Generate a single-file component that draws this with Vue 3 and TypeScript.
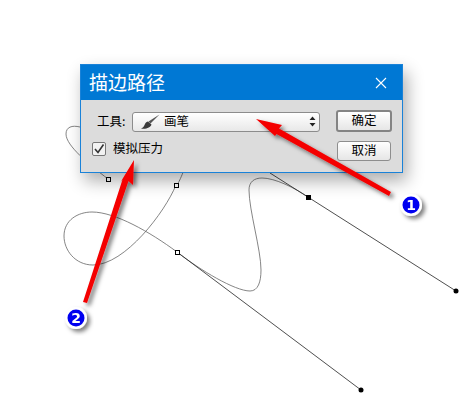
<script setup lang="ts">
const anchors: [number, number][] = [[108, 179], [176, 185], [177, 252]]
</script>

<template>
  <div class="stage">
    <svg class="layer" viewBox="0 0 472 409" width="472" height="409">
      <g fill="none">
        <path class="curve" d="M80 127C72 125 66 127 66 134C66 146 90 165 108 179" />
        <path class="curve" d="M184 170C176 190 176 185 176 185C165 212 125 265 93 265C75 265 64 250 64 236C64 220 78 212 92 212C115 212 150 232 177 252C200 270 235 291 250 291C258 291 261 282 261 270C261 250 249 210 249 190C249 182 254 178 262 178C275 178 295 188 308 197" />
        <path class="handle" d="M270 173L456 291M177 252L361 390" />
      </g>
      <rect v-for="a in anchors" :key="a[0]" class="anchor" :x="a[0] - 1.5" :y="a[1] - 1.5" width="4" height="4" />
      <rect x="306" y="195" width="5" height="5" fill="#000" />
      <circle cx="456" cy="291" r="2.500" fill="#000" />
      <circle cx="361" cy="390" r="2.500" fill="#000" />
    </svg>

    <section class="dialog">
      <header class="title">
        <h1>描边路径</h1>
        <svg class="close" viewBox="0 0 12 12" width="12" height="12">
          <path d="M1 1L11 11M11 1L1 11" stroke="#fff" stroke-width="1.100" fill="none" />
        </svg>
      </header>
      <div class="body">
        <div class="fields">
          <div class="row">
            <span class="label">工具:</span>
            <div class="select">
              <svg class="brush" viewBox="0 0 20 16" width="20" height="16">
                <path d="M18.500 0.500L9.500 9.500L7.500 7.500Z" fill="#555" />
                <path d="M7 7.500L10.500 10.500C9.500 13.500 5 15.500 0 14.500C2.500 13.500 3 12.500 4 10C4.500 8.500 6 7.500 7 7.500Z" fill="#3a3a3a" />
              </svg>
              <span class="value">画笔</span>
              <svg class="stepper" viewBox="0 0 7 11" width="7" height="11">
                <path d="M3.500 0.500L6.500 4H0.500ZM3.500 10.500L0.500 7H6.500Z" fill="#222" />
              </svg>
            </div>
          </div>
          <label class="check">
            <span class="box">
              <svg viewBox="0 0 14 14" width="14" height="14">
                <path d="M3 7L6 10.500L11.500 2.500" stroke="#333" stroke-width="1.600" fill="none" />
              </svg>
            </span>
            <span class="check-text">模拟压力</span>
          </label>
        </div>
        <div class="actions">
          <button class="btn primary" type="button">确定</button>
          <button class="btn" type="button">取消</button>
        </div>
      </div>
    </section>

    <svg class="layer" viewBox="0 0 472 409" width="472" height="409">
      <defs>
        <filter id="drop" x="-30%" y="-30%" width="160%" height="160%">
          <feDropShadow dx="3" dy="3" stdDeviation="2" flood-color="#000" flood-opacity="0.5" />
        </filter>
      </defs>
      <polygon class="arrow" points="256,119 282,125 279,128.500 391,192 389,196 276.500,134 275,136" />
      <polygon class="arrow" points="134,160 133,185 128.500,181 87,303 83,302 122.500,179.500 120,183" />
      <g class="badge">
        <circle cx="411" cy="205" r="11" fill="#fff" />
        <circle cx="411" cy="205" r="8.500" fill="#0000f0" />
        <text x="411" y="210">1</text>
      </g>
      <g class="badge">
        <circle cx="76" cy="318" r="11" fill="#fff" />
        <circle cx="76" cy="318" r="8.500" fill="#0000f0" />
        <text x="76" y="323">2</text>
      </g>
    </svg>
  </div>
</template>

<style scoped>
.stage {
  position: relative;
  width: 472px;
  height: 409px;
  overflow: hidden;
  background: #fff;
  font-family: "Noto Sans CJK SC", "Liberation Sans", sans-serif;
  color: #000;
}
.layer {
  position: absolute;
  left: 0;
  top: 0;
}
.curve {
  stroke: #666;
  stroke-width: 0.8;
}
.handle {
  stroke: #222;
  stroke-width: 0.8;
}
.anchor {
  fill: #fff;
  stroke: #000;
  stroke-width: 1;
}
.dialog {
  position: absolute;
  left: 80px;
  top: 64px;
  width: 323px;
  height: 109px;
  box-sizing: border-box;
  display: flex;
  flex-direction: column;
  border: 1px solid #1a82d8;
  background: #dcdcdc;
  box-shadow: 4px 8px 16px rgba(0, 0, 0, 0.32);
}
.title {
  height: 35px;
  flex: none;
  display: flex;
  align-items: center;
  justify-content: space-between;
  padding: 0 15px 0 8px;
  background: #0078d4;
  color: #fff;
}
.title h1 {
  margin: 0 0 2px;
  font-size: 19px;
  font-weight: 400;
  line-height: 24px;
}
.body {
  flex: 1;
  display: flex;
  justify-content: space-between;
  padding: 10px 10px 0 11px;
}
.fields {
  display: flex;
  flex-direction: column;
  gap: 10px;
  margin-top: 1px;
}
.row {
  display: flex;
  align-items: center;
  gap: 7px;
  padding-left: 5px;
}
.label {
  font-size: 12.5px;
  width: 28px;
  padding-bottom: 2px;
  white-space: nowrap;
}
.select {
  width: 188px;
  height: 20px;
  box-sizing: border-box;
  display: flex;
  align-items: center;
  padding: 0 3px 0 8px;
  border: 1px solid #8c8c8c;
  border-radius: 3px;
  background: linear-gradient(#fff, #e8e8e8);
}
.value {
  flex: 1;
  margin-left: 3px;
  padding-bottom: 2px;
  font-size: 12.5px;
}
.check {
  display: flex;
  align-items: center;
  gap: 7px;
  font-size: 12.5px;
  height: 14px;
}
.check-text {
  padding-bottom: 3px;
}
.box {
  width: 14px;
  height: 14px;
  box-sizing: border-box;
  border: 1px solid #777;
  border-radius: 2px;
  background: #f2f2f2;
  display: flex;
  align-items: center;
  justify-content: center;
}
.box svg {
  flex: none;
}
.actions {
  display: flex;
  flex-direction: column;
  align-items: center;
  gap: 9px;
  width: 56px;
}
.btn {
  width: 54px;
  height: 20px;
  padding: 0 0 2px;
  border: 1px solid #8e8e8e;
  border-radius: 3px;
  background: linear-gradient(#fff, #e6e6e6);
  font: inherit;
  font-size: 12.5px;
  line-height: 16px;
  color: #000;
}
.btn.primary {
  width: 56px;
  height: 22px;
  border: 2px solid #848484;
}
.arrow {
  fill: #f40000;
  filter: url(#drop);
}
.badge {
  filter: url(#drop);
}
.badge text {
  fill: #fff;
  font-family: "DejaVu Sans", sans-serif;
  font-size: 14px;
  font-weight: 700;
  text-anchor: middle;
}
</style>
